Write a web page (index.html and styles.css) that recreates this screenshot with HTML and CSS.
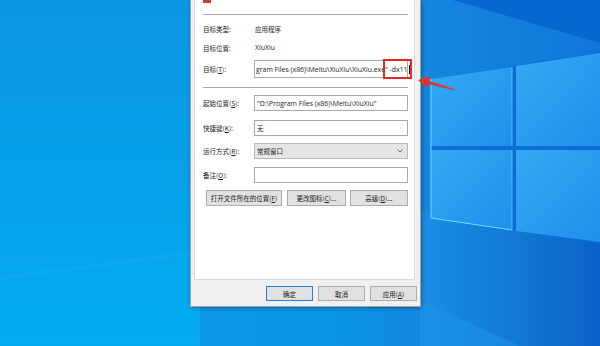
FILE: index.html
```html
<!DOCTYPE html>
<html lang="zh-CN">

<head>
    <meta charset="UTF-8">
    <title>XiuXiu 属性</title>
    <link rel="stylesheet" href="styles.css">
</head>

<body>
    <div class="desktop">
        <svg class="wallpaper" width="600" height="346" viewBox="0 0 600 346">
            <defs>
                <linearGradient id="base" x1="0" y1="0" x2="1" y2="0">
                    <stop offset="0" stop-color="#0a9de9" />
                    <stop offset="0.6" stop-color="#0b92e4" />
                    <stop offset="0.72" stop-color="#1686e0" />
                    <stop offset="1" stop-color="#0f76d8" />
                </linearGradient>
                <linearGradient id="leftGlow" x1="0" y1="0" x2="0" y2="1">
                    <stop offset="0" stop-color="#0b95e3" />
                    <stop offset="1" stop-color="#03acf1" />
                </linearGradient>
                <linearGradient id="pane" x1="0" y1="0" x2="1" y2="1">
                    <stop offset="0" stop-color="#34a9f3" />
                    <stop offset="1" stop-color="#1e90ea" />
                </linearGradient>
                <linearGradient id="floor" x1="0" y1="0" x2="1" y2="0">
                    <stop offset="0" stop-color="#1a8fe6" />
                    <stop offset="1" stop-color="#0a62c8" />
                </linearGradient>
            </defs>
            <rect width="600" height="346" fill="url(#base)" />
            <rect width="200" height="346" fill="url(#leftGlow)" />
            <polygon points="0,276 200,250 200,254 0,280" fill="#1ab4f4" opacity="0.25" />
            <polygon points="453,0 600,0 600,43" fill="#0866d0" />
            <polygon points="420,212 600,232 600,346 420,346" fill="url(#floor)" />
            <polygon points="420,300 520,346 420,346" fill="#1a92e8" opacity="0.6" />
            <polygon points="431,79 600,52 600,243 431,218" fill="#0b6ed6" />
            <polygon points="431,79 512,67 512,146 431,146" fill="url(#pane)" />
            <polygon points="516,66 600,53 600,146 516,146" fill="url(#pane)" />
            <polygon points="431,150 512,150 512,230 431,218" fill="url(#pane)" />
            <polygon points="516,150 600,150 600,242 516,231" fill="url(#pane)" />
            <polyline points="431,79 431,218 512,230" fill="none" stroke="#6fdcff" stroke-width="1" />
            <line x1="512" y1="67" x2="512" y2="146" stroke="#5fc8fb" stroke-width="0.8" />
            <line x1="512" y1="150" x2="512" y2="230" stroke="#5fc8fb" stroke-width="0.8" />
        </svg>

        <div class="dialog">
            <div class="panel">
                <div class="stub"></div>
                <div class="sep first"></div>

                <div class="row info r1">
                    <span class="label">目标类型:</span>
                    <span class="value">应用程序</span>
                </div>
                <div class="row info r2">
                    <span class="label">目标位置:</span>
                    <span class="value latin">XiuXiu</span>
                </div>
                <div class="row r3">
                    <span class="label">目标(<u>T</u>):</span>
                    <div class="field target">
                        <span class="latin">gram Files (x86)\Meitu\XiuXiu\XiuXiu.exe" -dx11</span>
                        <span class="caret"></span>
                        <div class="mark"></div>
                    </div>
                </div>

                <div class="sep second"></div>

                <div class="row r4">
                    <span class="label">起始位置(<u>S</u>):</span>
                    <div class="field"><span class="latin">"D:\Program Files (x86)\Meitu\XiuXiu"</span></div>
                </div>
                <div class="row r5">
                    <span class="label">快捷键(<u>K</u>):</span>
                    <div class="field">无</div>
                </div>
                <div class="row r6">
                    <span class="label">运行方式(<u>R</u>):</span>
                    <div class="field select">
                        <span>常规窗口</span>
                        <svg class="chevron" width="6" height="4" viewBox="0 0 6 4">
                            <polyline points="0.5,0.5 3,3 5.5,0.5" fill="none" stroke="#444" stroke-width="0.8" />
                        </svg>
                    </div>
                </div>
                <div class="row r7">
                    <span class="label">备注(<u>O</u>):</span>
                    <div class="field"></div>
                </div>

                <div class="actions">
                    <button class="btn wide">打开文件所在的位置(<u>F</u>)</button>
                    <button class="btn mid">更改图标(<u>C</u>)...</button>
                    <button class="btn mid last">高级(<u>D</u>)...</button>
                </div>
            </div>

            <div class="footer">
                <button class="btn foot default">确定</button>
                <button class="btn foot">取消</button>
                <button class="btn foot">应用(<u>A</u>)</button>
            </div>
        </div>

        <svg class="arrow" width="40" height="16" viewBox="0 0 40 16">
            <polygon points="2,4 14,0 13,5 38,13 37,14 12,8 11,12" fill="#e2322b" />
        </svg>
    </div>
</body>

</html>
```

FILE: styles.css
```css
body {
    margin: 0;
}

.desktop {
    position: relative;
    width: 600px;
    height: 346px;
    overflow: hidden;
    font-family: "Noto Sans CJK SC", "Noto Sans", sans-serif;
    font-size: 6.5px;
    color: #1a1a1a;
}

.wallpaper {
    position: absolute;
    left: 0;
    top: 0;
}

/* properties window */
.dialog {
    position: relative;
    box-sizing: border-box;
    width: 231px;
    height: 307px;
    margin-left: 190px;
    padding: 0 3px;
    background: #f0f0f0;
    border: 1px solid #a4a4a4;
    border-top: none;
    box-shadow: 1px 1px 4px rgba(0, 0, 0, 0.35);
}

.panel {
    box-sizing: border-box;
    width: 221px;
    height: 280px;
    padding: 0 6px 0 8px;
    background: #fff;
    border: 1px solid #d9d9d9;
    border-top: none;
}

.stub {
    width: 8px;
    height: 3px;
    background: #d8392f;
}

.sep {
    height: 1px;
    background: #a8a8a8;
}

.sep.first {
    margin-top: 11px;
}

.sep.second {
    margin-top: 9px;
}

.row {
    display: flex;
    align-items: center;
}

.label {
    width: 51px;
    flex-shrink: 0;
    white-space: nowrap;
}

.value {
    padding-left: 1px;
}

.r1 {
    margin-top: 5px;
    height: 17px;
}

.r2 {
    margin-top: 2px;
    height: 17px;
}

.r3 {
    margin-top: 4px;
    height: 18px;
}

.r4 {
    margin-top: 7px;
    height: 16px;
}

.r5 {
    margin-top: 9px;
    height: 16px;
}

.r6 {
    margin-top: 7px;
    height: 16px;
}

.r7 {
    margin-top: 8px;
    height: 16px;
}

.field {
    position: relative;
    box-sizing: border-box;
    flex: 1;
    min-width: 0;
    height: 100%;
    display: flex;
    align-items: center;
    padding: 0 2px;
    background: #fff;
    border: 1px solid #a9a9a9;
    white-space: nowrap;
    overflow: hidden;
}

.latin {
    font-family: "Open Sans", "Noto Sans", sans-serif;
    font-size: 6.9px;
}

.target {
    padding-left: 1px;
    overflow: visible;
}

.caret {
    flex-shrink: 0;
    width: 1px;
    height: 9px;
    margin-left: 1px;
    background: #000;
}

/* red annotation around the added switch */
.mark {
    position: absolute;
    right: -5px;
    top: -2px;
    width: 25px;
    height: 16px;
    border: 2px solid #e12a24;
}

.select {
    justify-content: space-between;
    padding: 0 4px 0 2px;
    background: #e5e5e5;
    border-color: #b8b8b8;
}

.actions {
    display: flex;
    gap: 5px;
    margin-top: 7px;
    margin-left: 3px;
}

.btn {
    box-sizing: border-box;
    height: 16px;
    padding: 0;
    font-family: "Noto Sans CJK SC", "Noto Sans", sans-serif;
    font-size: 6.5px;
    color: #1a1a1a;
    background: #e1e1e1;
    border: 1px solid #adadad;
}

.btn.wide {
    width: 76px;
}

.btn.mid {
    width: 59px;
}

.btn.last {
    width: 58px;
    margin-left: -1px;
}

.footer {
    display: flex;
    justify-content: flex-end;
    gap: 5px;
    padding-top: 6px;
}

.btn.foot {
    width: 47px;
    height: 15px;
}

.btn.default {
    border-color: #2a7fd4;
}

.arrow {
    position: absolute;
    left: 416px;
    top: 76px;
}
```
